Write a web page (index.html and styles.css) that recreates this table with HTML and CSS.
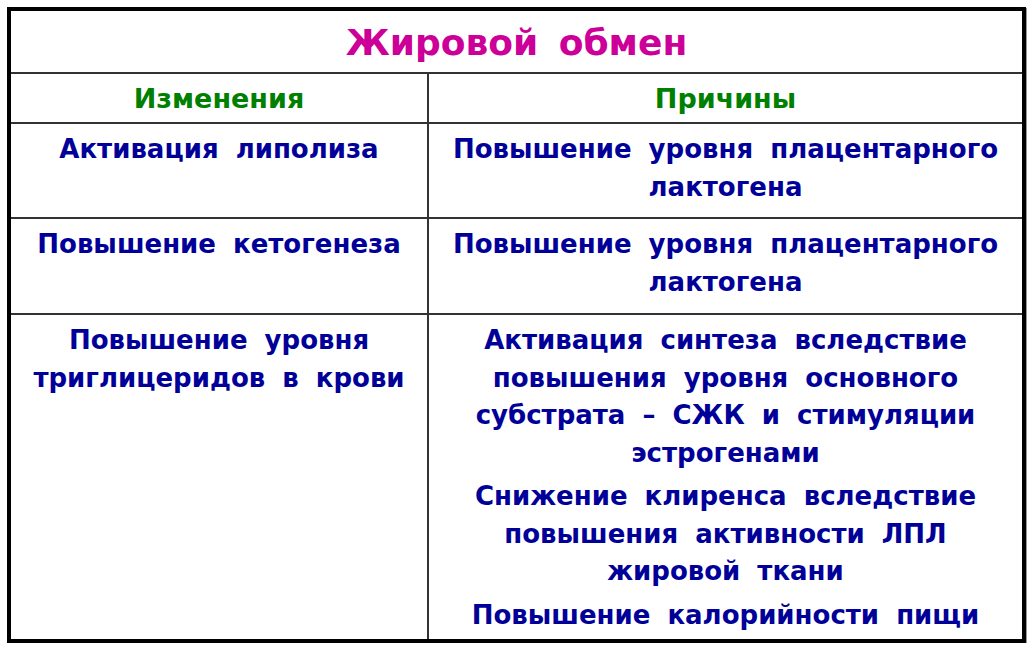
FILE: index.html
```html
<!DOCTYPE html>
<html lang="ru">
<head>
<meta charset="utf-8">
<title>Жировой обмен</title>
<link rel="stylesheet" href="styles.css">
</head>
<body>
<div class="sheet">
  <div class="title">Жировой обмен</div>
  <div class="head left">Изменения</div>
  <div class="head">Причины</div>
  <div class="cell left r1"><p>Активация липолиза</p></div>
  <div class="cell r1"><p>Повышение уровня плацентарного<br>лактогена</p></div>
  <div class="cell left r2"><p>Повышение кетогенеза</p></div>
  <div class="cell r2"><p>Повышение уровня плацентарного<br>лактогена</p></div>
  <div class="cell left r3"><p>Повышение уровня<br>триглицеридов в крови</p></div>
  <div class="cell r3">
    <p>Активация синтеза вследствие<br>повышения уровня основного<br>субстрата – СЖК и стимуляции<br>эстрогенами</p>
    <p>Снижение клиренса вследствие<br>повышения активности ЛПЛ<br>жировой ткани</p>
    <p>Повышение калорийности пищи</p>
  </div>
</div>
</body>
</html>
```

FILE: styles.css
```css
html, body {
  margin: 0;
  padding: 0;
  background: #ffffff;
}
body {
  padding: 7px 0 0 7px;
}
.sheet {
  box-sizing: border-box;
  width: 1019px;
  height: 636px;
  border: 4px solid #000;
  box-shadow: 1px 1px 0 #999;
  display: grid;
  grid-template-columns: 418px 593px;
  grid-template-rows: 63px 50px 95px 96px 324px;
  font-family: "DejaVu Sans", sans-serif;
  font-weight: bold;
  color: #000099;
  text-align: center;
}
.title {
  grid-column: 1 / 3;
  border-bottom: 2px solid #333;
  color: #cc0099;
  font-size: 36px;
  display: flex;
  align-items: center;
  justify-content: center;
  word-spacing: 8px;
  padding-top: 2px;
}
.head {
  border-bottom: 2px solid #333;
  color: #008000;
  font-size: 27px;
  display: flex;
  align-items: center;
  justify-content: center;
}
.left {
  border-right: 2px solid #333;
}
.cell {
  font-size: 26px;
  line-height: 37.5px;
  padding-top: 7px;
  white-space: nowrap;
  word-spacing: 8px;
}
.r1, .r2 {
  border-bottom: 2px solid #333;
}
.cell p {
  margin: 0 0 6px 0;
}
```
